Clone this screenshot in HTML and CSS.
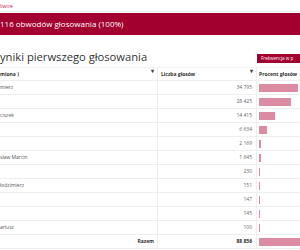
FILE: index.html
```html
<!DOCTYPE html>
<html lang="pl">
<head>
    <meta charset="UTF-8">
    <meta name="viewport" content="width=device-width, initial-scale=1.0">
    <title>Wyniki pierwszego głosowania</title>
    <link rel="stylesheet" href="styles.css">
</head>
<body>
    <div class="crumb">liwice</div>
    <div class="banner">116 obwodów głosowania (100%)</div>

    <div class="head">
        <h1>yniki pierwszego głosowania</h1>
        <button class="freq">Frekwencja w p</button>
    </div>

    <div class="results">
        <div class="row header">
            <div class="cell name">miona )<span class="sort">▾</span></div>
            <div class="cell count">Liczba głosów<span class="sort">▾</span></div>
            <div class="cell pct">Procent głosów</div>
        </div>
        <div class="row">
            <div class="cell name">mierz</div>
            <div class="cell count">34 795</div>
            <div class="cell pct"><div class="bar" style="width: 39.2px"></div></div>
        </div>
        <div class="row">
            <div class="cell name"></div>
            <div class="cell count">28 425</div>
            <div class="cell pct"><div class="bar" style="width: 32px"></div></div>
        </div>
        <div class="row">
            <div class="cell name">ciszek</div>
            <div class="cell count">14 415</div>
            <div class="cell pct"><div class="bar" style="width: 16.2px"></div></div>
        </div>
        <div class="row">
            <div class="cell name"></div>
            <div class="cell count">6 634</div>
            <div class="cell pct"><div class="bar" style="width: 7.5px"></div></div>
        </div>
        <div class="row">
            <div class="cell name"></div>
            <div class="cell count">2 169</div>
            <div class="cell pct"><div class="bar" style="width: 2.4px"></div></div>
        </div>
        <div class="row">
            <div class="cell name">sław Marcin</div>
            <div class="cell count">1 645</div>
            <div class="cell pct"><div class="bar" style="width: 1.9px"></div></div>
        </div>
        <div class="row">
            <div class="cell name"></div>
            <div class="cell count">230</div>
            <div class="cell pct"><div class="bar" style="width: 0.3px"></div></div>
        </div>
        <div class="row">
            <div class="cell name">łodzimierz</div>
            <div class="cell count">151</div>
            <div class="cell pct"><div class="bar" style="width: 0.2px"></div></div>
        </div>
        <div class="row">
            <div class="cell name"></div>
            <div class="cell count">147</div>
            <div class="cell pct"><div class="bar" style="width: 0.2px"></div></div>
        </div>
        <div class="row">
            <div class="cell name"></div>
            <div class="cell count">145</div>
            <div class="cell pct"><div class="bar" style="width: 0.2px"></div></div>
        </div>
        <div class="row">
            <div class="cell name">ariusz</div>
            <div class="cell count">100</div>
            <div class="cell pct"><div class="bar" style="width: 0.1px"></div></div>
        </div>
        <div class="row total">
            <div class="cell name">Razem</div>
            <div class="cell count">88 856</div>
            <div class="cell pct"><div class="bar" style="width: 100px"></div></div>
        </div>
    </div>
</body>
</html>
```

FILE: styles.css
```css
body {
    margin: 0;
    width: 300px;
    height: 250px;
    overflow: hidden;
    background: #fff;
    font-family: "Open Sans", sans-serif;
    color: #555;
}
.crumb {
    height: 12px;
    padding-top: 1px;
    box-sizing: border-box;
    font-size: 5px;
    line-height: 10px;
    color: #b3274a;
    border-bottom: 1px solid #eee;
}
.banner {
    margin-top: 1px;
    height: 22px;
    line-height: 22px;
    background: #a2002e;
    color: #fff;
    font-size: 8px;
}
.head {
    display: flex;
    align-items: flex-end;
    height: 16px;
    margin-top: 14px;
    overflow: hidden;
}
.head h1 {
    margin: 0;
    font-size: 11.2px;
    font-weight: 400;
    line-height: 16px;
    color: #333;
    white-space: nowrap;
}
.freq {
    margin-left: auto;
    margin-bottom: 2px;
    width: 43px;
    height: 9px;
    padding: 0 0 0 4px;
    border: none;
    background: #a2002e;
    color: #fff;
    font-family: "Open Sans", sans-serif;
    font-size: 4.5px;
    line-height: 9px;
    text-align: left;
    white-space: nowrap;
    overflow: hidden;
}
.results {
    margin-top: 2px;
    width: 300px;
    overflow: hidden;
}
.row {
    display: grid;
    grid-template-columns: 157px 99px 44px;
    height: 14px;
    border-bottom: 1px solid #eee;
    box-sizing: border-box;
    font-size: 5px;
    line-height: 13px;
}
.cell {
    position: relative;
    white-space: nowrap;
}
.count {
    border-left: 1px solid #eee;
    text-align: right;
    padding-right: 4px;
    color: #666;
}
.pct {
    border-left: 1px solid #eee;
    padding-left: 2px;
    display: flex;
    align-items: center;
    overflow: hidden;
}
.bar {
    flex: none;
    height: 8px;
    background: #db8ca2;
}
.header {
    font-weight: 700;
    color: #333;
    border-top: 1px solid #f2f2f2;
}
.header .count {
    text-align: left;
    padding-left: 3px;
    color: #333;
}
.header .pct {
    align-items: stretch;
}
.sort {
    position: absolute;
    right: 3px;
    top: -3px;
    font-size: 6px;
    color: #444;
}
.total {
    font-weight: 700;
    color: #333;
}
.total .name {
    text-align: right;
    padding-right: 3px;
}
.total .count {
    color: #333;
}
```
